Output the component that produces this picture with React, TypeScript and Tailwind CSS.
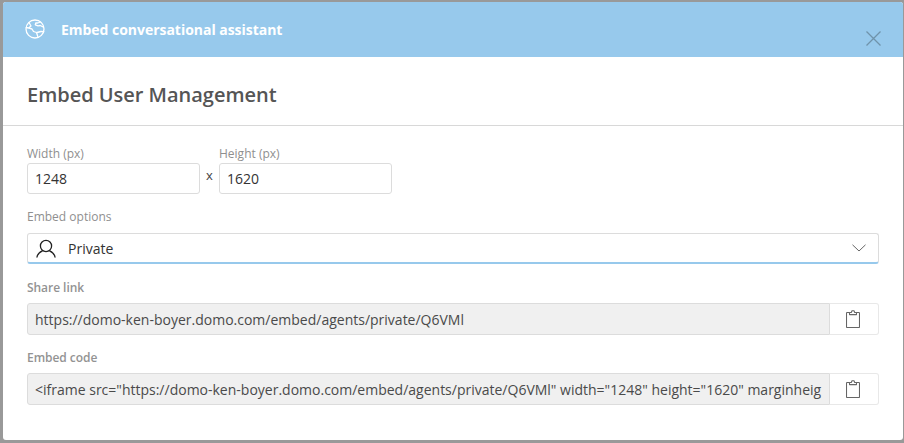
import React from "react";

const ClipIcon = () => (
  <svg className="mr-[2px]" width="14" height="18" viewBox="0 0 14 18" fill="none" stroke="#666" strokeWidth="1.1" strokeLinejoin="round">
    <path d="M3.5 2.5H1.2a.7.7 0 0 0-.7.7v13.6a.7.7 0 0 0 .7.7h11.6a.7.7 0 0 0 .7-.7V3.2a.7.7 0 0 0-.7-.7h-2.3" />
    <path d="M3.5 4.6V2.5h1.8L6 .8h2l.7 1.7h1.8v2.1z" />
  </svg>
);

const Field = ({ label, value }: { label: string; value: string }) => (
  <div className="flex flex-col">
    <label className="h-[16px] text-[12px] leading-[16px] font-semibold tracking-[-0.05px] text-[#939393] mb-[7px]">{label}</label>
    <div className="flex h-[32px] w-[852px]">
      <div className="flex-1 min-w-0 bg-[#f0f0f0] border border-[#dcdcdc] rounded-l-[3px] pl-[7px] text-[14px] leading-[31px] text-[#4a4a4a] whitespace-nowrap">
        {value}
      </div>
      <div className="w-[49px] shrink-0 bg-white border border-l-0 border-[#e8e8e8] rounded-r-[3px] flex items-center justify-center">
        <ClipIcon />
      </div>
    </div>
  </div>
);

export default function App() {
  return (
    <div
      className="w-[904px] h-[443px] bg-[#999999] pt-[2px] pl-[3px] pr-[1px] pb-[3px] overflow-hidden"
      style={{ fontFamily: '"Open Sans", sans-serif' }}
    >
      <div className="h-full bg-white rounded-[3px] overflow-hidden flex flex-col">
        <div className="relative h-[55px] shrink-0 bg-[#97c9ec] flex items-center pl-[22px] pb-[1px]">
          <svg width="20" height="20" viewBox="0 0 20 20" fill="none" stroke="white" strokeWidth="1.3" strokeLinejoin="round" strokeLinecap="round">
            <circle cx="10" cy="10" r="9" />
            <path d="M4 3.5 6 7 3.5 9 1.2 8.5M4 9.2l3 .8 1.5 2.5 3 1 1.5 4.6M15.5 3l-2.8 1-1.8-.2-.6 2 2.7 1 2.2-.3 3.4 1.7M12 13.5l4-1 2.8.2" />
          </svg>
          <span className="ml-[16px] text-[14px] font-bold tracking-[-0.03px] text-white">Embed conversational assistant</span>
          <svg className="absolute left-[863px] top-[29px]" width="15" height="15" viewBox="0 0 15 15" stroke="#6f93ab" strokeWidth="1.3">
            <path d="M.5.5l14 14M14.5.5l-14 14" />
          </svg>
        </div>
        <div className="h-[69px] shrink-0 border-b border-[#d8d8d8] pl-[24px] pt-[24px]">
          <h1 className="text-[20px] leading-[28px] font-semibold tracking-[-0.02px] text-[#555555]">Embed User Management</h1>
        </div>
        <div className="pl-[24px] pt-[20px] flex flex-col">
          <div className="flex items-start">
            <div className="flex flex-col w-[173px]">
              <label className="h-[16px] text-[12px] leading-[16px] text-[#8f8f8f] mb-[1px]">Width (px)</label>
              <div className="h-[31px] border border-[#dcdcdc] rounded-[3px] pl-[7px] text-[14px] leading-[29px] text-[#333]">1248</div>
            </div>
            <span className="w-[19px] mt-[20px] text-center text-[13px] leading-[18px] text-[#444]">x</span>
            <div className="flex flex-col w-[173px]">
              <label className="h-[16px] text-[12px] leading-[16px] text-[#8f8f8f] mb-[1px]">Height (px)</label>
              <div className="h-[31px] border border-[#dcdcdc] rounded-[3px] pl-[7px] text-[14px] leading-[29px] text-[#333]">1620</div>
            </div>
          </div>
          <label className="mt-[15px] h-[16px] text-[12px] leading-[16px] text-[#8f8f8f]">Embed options</label>
          <div className="mt-[8px] w-[852px] h-[31px] border border-[#dcdcdc] border-b-2 border-b-[#97c9ec] rounded-[3px] flex items-center pl-[8px] pr-[12px]">
            <svg className="mt-[1px]" width="20" height="19" viewBox="0 0 20 19" fill="none" stroke="#222" strokeWidth="1.3" strokeLinecap="round">
              <circle cx="10" cy="7" r="5.6" />
              <path d="M1 18c.6-3.2 3.2-5.2 5.4-6.2M19 18c-.6-3.2-3.2-5.2-5.4-6.2" />
            </svg>
            <span className="ml-[12px] mt-[1px] flex-1 text-[14px] text-[#333]">Private</span>
            <svg width="14" height="8" viewBox="0 0 14 8" fill="none" stroke="#666" strokeWidth="1">
              <path d="M.5.8 7 7 13.5.8" />
            </svg>
          </div>
          <div className="mt-[16px]">
            <Field label="Share link" value="https://domo-ken-boyer.domo.com/embed/agents/private/Q6VMl" />
          </div>
          <div className="mt-[15px]">
            <Field
              label="Embed code"
              value={'<iframe src="https://domo-ken-boyer.domo.com/embed/agents/private/Q6VMl" width="1248" height="1620" marginheig'}
            />
          </div>
        </div>
      </div>
    </div>
  );
}
